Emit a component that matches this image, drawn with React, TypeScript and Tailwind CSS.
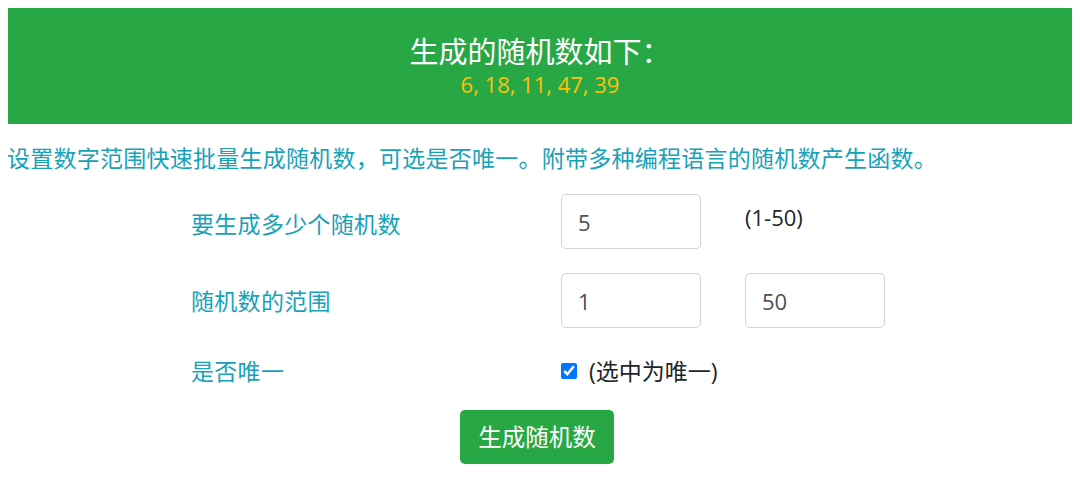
import React from "react";

const font = "font-['Open_Sans','Noto_Sans_CJK_SC',sans-serif]";

export default function App() {
  return (
    <div className={`w-[1080px] h-[487px] bg-white ${font} overflow-hidden`}>
      <div className="pt-[8px] px-[8px]">
        <div className="bg-[#28a745] h-[116px] flex flex-col items-center pt-[25px]">
          <div className="text-white text-[29px] leading-[38px]">生成的随机数如下：</div>
          <div className="text-[#ffc107] text-[22px] leading-[28px] mt-[-1px]">6, 18, 11, 47, 39</div>
        </div>
      </div>
      <p className="text-[#17a2b8] text-[23px] leading-[30px] mt-[19px] pl-[7px] tracking-[0.25px]">
        设置数字范围快速批量生成随机数，可选是否唯一。附带多种编程语言的随机数产生函数。
      </p>
      <div className="pl-[191px] mt-[21px]">
        <div className="flex items-center h-[55px]">
          <label className="w-[370px] text-[#17a2b8] text-[23px] leading-[30px] tracking-[0.3px] pt-[4px]">要生成多少个随机数</label>
          <input
            defaultValue="5"
            className="w-[140px] h-[55px] border border-[#ced4da] rounded-[5px] px-[16px] text-[22px] text-[#495057] outline-none"
          />
          <span className="ml-[44px] text-[22px] text-[#212529] self-start mt-[7px]">(1-50)</span>
        </div>
        <div className="flex items-center h-[55px] mt-[24px]">
          <label className="w-[370px] text-[#17a2b8] text-[23px] leading-[30px] tracking-[0.3px]">随机数的范围</label>
          <input
            defaultValue="1"
            className="w-[140px] h-[55px] border border-[#ced4da] rounded-[5px] px-[16px] text-[22px] text-[#495057] outline-none"
          />
          <input
            defaultValue="50"
            className="ml-[44px] w-[140px] h-[55px] border border-[#ced4da] rounded-[5px] px-[16px] text-[22px] text-[#495057] outline-none"
          />
        </div>
        <div className="flex items-center h-[30px] mt-[28px]">
          <label className="w-[370px] text-[#17a2b8] text-[23px] leading-[30px] tracking-[0.3px]">是否唯一</label>
          <input type="checkbox" defaultChecked className="w-[16px] h-[16px] m-0 accent-[#0075ff]" />
          <span className="ml-[12px] text-[23px] text-[#212529] leading-[30px]">(选中为唯一)</span>
        </div>
      </div>
      <div className="flex justify-center mt-[24px] pr-[6px]">
        <button className="bg-[#28a745] text-white text-[23.5px] leading-[30px] w-[154px] h-[54px] rounded-[5px]">
          生成随机数
        </button>
      </div>
    </div>
  );
}
